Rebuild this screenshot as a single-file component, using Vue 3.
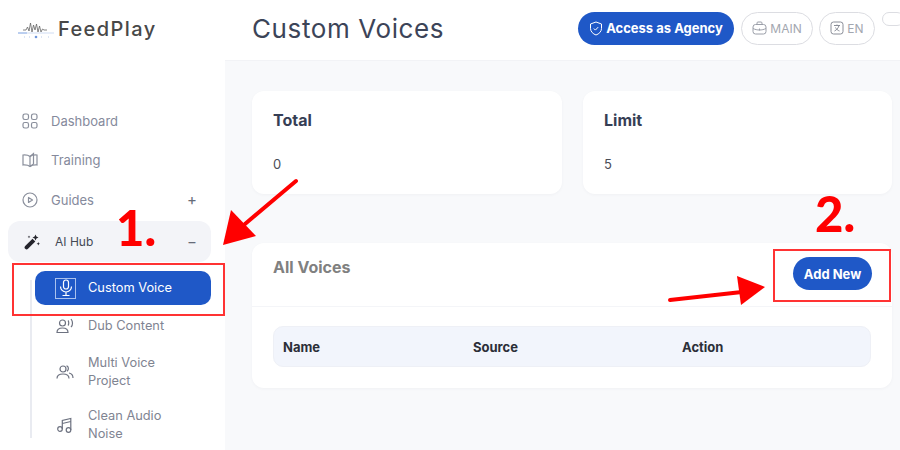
<template>
  <div class="app">
    <aside class="sidebar">
      <div class="logo">
        <svg width="38" height="22" viewBox="0 0 38 22" fill="none">
          <path d="M5 12h3l1.500-3 1.500 4 1.500-8 1.500 9 1.500-7 1.500 5 1.500-6 1.500 8 1.500-6 1.500 6 1.500-3 1.500 1h3" stroke="#666" stroke-width=".8" />
          <path d="M0 15h36" stroke="#cfdcf3" stroke-width="1" />
          <path d="M0 15h9" stroke="#8fb0e6" stroke-width="1" />
          <circle cx="18" cy="19" r="1.300" fill="#6f96dc" />
          <path d="M6 19h1M11 19h1M23 19h1M30 19h1" stroke="#b9cbeb" stroke-width="1" />
        </svg>
        <span>FeedPlay</span>
      </div>
      <nav class="nav">
        <a class="nav-item">
          <svg class="ico" viewBox="0 0 16 16" fill="none" stroke="#8a8f9c" stroke-width="1.200">
            <rect x="1" y="1" width="5.500" height="5.500" rx="1.800" />
            <rect x="9.500" y="1" width="5.500" height="5.500" rx="1.800" />
            <rect x="1" y="9.500" width="5.500" height="5.500" rx="1.800" />
            <rect x="9.500" y="9.500" width="5.500" height="5.500" rx="1.800" />
          </svg>
          <span>Dashboard</span>
        </a>
        <a class="nav-item">
          <svg class="ico" viewBox="0 0 16 16" fill="none" stroke="#8a8f9c" stroke-width="1.200">
            <path d="M8 4.500C6.500 3.200 4 2.800 1 3v10c3-.2 5.500.2 7 1.500 1.500-1.300 4-1.700 7-1.500V3c-3-.2-5.500.2-7 1.500z" />
            <path d="M8 4.500v10M8 14.500l3.500-2.500V1.500L8 4.500" />
          </svg>
          <span>Training</span>
        </a>
        <a class="nav-item">
          <svg class="ico" viewBox="0 0 16 16" fill="none" stroke="#8a8f9c" stroke-width="1.200">
            <circle cx="8" cy="8" r="7" />
            <path d="M6.500 5.500v5l4-2.500z" stroke-linejoin="round" />
          </svg>
          <span>Guides</span>
          <em class="toggle">+</em>
        </a>
        <a class="nav-item open">
          <svg class="ico" viewBox="0 0 16 16" fill="#24242c">
            <path d="M1.200 12l7.300-7.300 2.800 2.800L4 14.800a2 2 0 0 1-2.800 0 2 2 0 0 1 0-2.800z" />
            <path d="M11.500 .5l.9 2.100 2.100.9-2.100.9-.9 2.100-.9-2.100-2.100-.9 2.100-.9zM14.300 8l.5 1.200 1.200.5-1.200.5-.5 1.200-.5-1.200-1.200-.5 1.200-.5zM5 1.500l.4 1 1 .4-1 .4-.4 1-.4-1-1-.4 1-.4z" />
          </svg>
          <span>AI Hub</span>
          <em class="toggle">−</em>
        </a>
        <div class="sub">
          <a class="sub-item active">
            <span class="mic-box">
              <svg width="16" height="18" viewBox="0 0 16 18" fill="none" stroke="#fff" stroke-width="1.200">
                <rect x="5.500" y="1" width="5" height="9" rx="2.500" />
                <path d="M2.500 7.500a5.500 5.500 0 0 0 11 0M8 13v3M4.500 16.500h7" />
              </svg>
            </span>
            <span>Custom Voice</span>
          </a>
          <a class="sub-item">
            <svg class="sub-ico" viewBox="0 0 18 16" fill="none" stroke="#6d7280" stroke-width="1.200">
              <circle cx="6.500" cy="5" r="3" />
              <path d="M1 14.500c0-3 2.500-4.500 5.500-4.500s5.500 1.500 5.500 4.500zM12 2.500c1 1 1 4 0 5M15 1c2 2.500 2 6 0 8" />
            </svg>
            <span>Dub Content</span>
          </a>
          <a class="sub-item tall">
            <svg class="sub-ico" viewBox="0 0 18 16" fill="none" stroke="#6d7280" stroke-width="1.200">
              <circle cx="7" cy="5" r="3" />
              <path d="M1 14.500c0-3 2.500-4.500 6-4.500s6 1.500 6 4.500M10.500 1.800c2 .4 2.800 3.600.5 5.400M13 9c2.500.5 4 2.500 4 5" />
            </svg>
            <span>Multi Voice Project</span>
          </a>
          <a class="sub-item tall">
            <svg class="sub-ico" viewBox="0 0 18 16" fill="none" stroke="#6d7280" stroke-width="1.200">
              <circle cx="4" cy="12" r="2.300" />
              <circle cx="12.500" cy="13" r="2.300" />
              <path d="M6.300 12V3.500L14.800 1.500V13M6.300 6.500l8.500-2" />
            </svg>
            <span>Clean Audio Noise</span>
          </a>
        </div>
      </nav>
    </aside>

    <main class="main">
      <header class="topbar">
        <h1>Custom Voices</h1>
        <div class="actions">
          <button class="agency">
            <svg width="14" height="15" viewBox="0 0 14 15" fill="none" stroke="#fff" stroke-width="1">
              <path d="M7 1l5.500 2v4.500c0 3-2.500 5.500-5.500 6.500-3-1-5.500-3.500-5.500-6.500V3z" />
              <path d="M4.800 7.500l1.600 1.600 2.800-3" />
            </svg>
            Access as Agency
          </button>
          <button class="ghost main-btn">
            <svg width="15" height="14" viewBox="0 0 15 14" fill="none" stroke="#9a9ea8" stroke-width="1">
              <rect x="1" y="3.500" width="13" height="9.500" rx="2.500" />
              <path d="M5 3.500V2a1 1 0 0 1 1-1h3a1 1 0 0 1 1 1v1.500M1 7.500c4 2 9 2 13 0M7.500 7.500v2" />
            </svg>
            MAIN
          </button>
          <button class="ghost lang">
            <svg width="14" height="14" viewBox="0 0 14 14" fill="none" stroke="#8a8e98" stroke-width="1">
              <rect x="1" y="1" width="12" height="12" rx="2.500" />
              <path d="M4 4.500h6M7 3.500v1M9 4.500c-.5 2.500-2.500 4.500-4.500 5.500M5.500 6.500c.8 1.500 2.300 3 4 3.500" />
            </svg>
            EN
          </button>
          <span class="switch"></span>
        </div>
      </header>

      <div class="content">
        <section class="stats">
          <div class="card stat">
            <h3>Total</h3>
            <p>0</p>
          </div>
          <div class="card stat">
            <h3>Limit</h3>
            <p>5</p>
          </div>
        </section>
        <section class="card voices">
          <div class="voices-head">
            <h3>All Voices</h3>
            <button class="add">Add New</button>
          </div>
          <div class="voices-body">
            <div class="thead">
              <span v-for="col in columns" :key="col.name" :style="{ width: col.width + 'px' }">{{ col.name }}</span>
            </div>
          </div>
        </section>
      </div>
    </main>

    <!-- tutorial annotations drawn over the screenshot -->
    <div class="note-box box-one"></div>
    <div class="note-box box-two"></div>
    <span class="num num-one">1.</span>
    <span class="num num-two">2.</span>
    <svg class="arrows" width="900" height="450" viewBox="0 0 900 450" fill="none">
      <path d="M296 181L245 224" stroke="#f00" stroke-width="4" stroke-linecap="round" />
      <path d="M223 245L231 210L256 236z" fill="#f00" />
      <path d="M670 300L742 292" stroke="#f00" stroke-width="4" stroke-linecap="round" />
      <path d="M737 276L765 287L741 305z" fill="#f00" />
    </svg>
  </div>
</template>

<script setup>
const columns = [
  { name: 'Name', width: 190 },
  { name: 'Source', width: 209 },
  { name: 'Action', width: 150 }
]
</script>

<style>
html, body {
  margin: 0;
  background: #f8f9fb;
}
</style>

<style scoped>
.app {
  position: relative;
  display: flex;
  width: 900px;
  height: 450px;
  overflow: hidden;
  font-family: "Inter", "Noto Sans", sans-serif;
  background: #f8f9fb;
}
.sidebar {
  width: 225px;
  flex: none;
  background: #fff;
  box-sizing: border-box;
  padding: 0 14px 0 8px;
}
.logo {
  display: flex;
  align-items: center;
  gap: 2px;
  height: 20px;
  margin: 19px 0 0 10px;
  font-size: 20px;
  font-weight: 500;
  color: #484848;
  letter-spacing: 1.400px;
}
.nav {
  margin-top: 62px;
}
.nav-item {
  display: flex;
  align-items: center;
  height: 39.500px;
  padding: 0 14px;
  font-size: 13px;
  color: #858a9c;
}
.nav-item.open {
  height: 41px;
  margin-top: 1.500px;
  border-radius: 12px;
  background: #f3f4f8;
  color: #444955;
  font-size: 12px;
}
.ico {
  width: 16px;
  height: 16px;
  margin-right: 13px;
}
.open .ico {
  margin-left: 2px;
  margin-right: 15px;
}
.toggle {
  margin-left: auto;
  font-style: normal;
  font-size: 15px;
  color: #666b78;
}
.sub {
  margin: 9px 0 0 22px;
  border-left: 1px solid transparent;
  position: relative;
}
.sub::before {
  content: "";
  position: absolute;
  left: -1px;
  top: 9px;
  height: 158px;
  width: 1.500px;
  background: #e9ebf1;
}
.sub-item {
  display: flex;
  align-items: center;
  margin-left: 4px;
  min-height: 40px;
  padding-left: 21px;
  font-size: 12.800px;
  line-height: 18px;
  color: #7f8492;
}
.sub-item.active {
  height: 34px;
  min-height: 34px;
  margin-bottom: 1px;
  padding-left: 20px;
  border-radius: 10px;
  background: #1f58c7;
  color: #fff;
}
.sub-item.tall {
  width: 118px;
  min-height: 36px;
  margin-bottom: 17px;
}
.sub-item.tall:nth-child(3) {
  margin-top: 8px;
}
.mic-box {
  display: flex;
  align-items: center;
  justify-content: center;
  width: 21px;
  height: 21px;
  margin-right: 12px;
  border: 1px solid #a9c1ee;
  box-sizing: border-box;
}
.sub-ico {
  flex: none;
  width: 18px;
  height: 16px;
  margin-right: 14px;
}
.main {
  flex: 1;
  min-width: 0;
}
.topbar {
  display: flex;
  align-items: center;
  justify-content: space-between;
  height: 61px;
  padding: 0 0 0 27px;
  box-sizing: border-box;
  background: #fff;
  border-bottom: 1px solid #f2f3f6;
}
h1 {
  margin: -4px 0 0;
  font-size: 26px;
  font-weight: 400;
  color: #3c4458;
  letter-spacing: .6px;
}
.actions {
  display: flex;
  align-items: center;
  gap: 6px;
  height: 33px;
  margin-top: -4px;
}
button {
  font-family: inherit;
  border: 0;
  cursor: pointer;
}
.agency {
  display: flex;
  align-items: center;
  justify-content: center;
  gap: 3px;
  width: 156px;
  height: 33px;
  margin-right: 1px;
  border-radius: 17px;
  background: #1f58c7;
  color: #fff;
  font-size: 13px;
  font-weight: 700;
  padding: 0;
}
.ghost {
  display: flex;
  align-items: center;
  justify-content: center;
  gap: 3px;
  height: 33px;
  padding: 0;
  border: 1px solid #dcdde2;
  border-radius: 17px;
  background: #fff;
  color: #a3a7b0;
  font-size: 12px;
}
.main-btn {
  width: 72px;
}
.lang {
  width: 56px;
}
.switch {
  align-self: flex-start;
  width: 22px;
  height: 14px;
  margin: 0 -4px 0 1px;
  border: 1px solid #dcdde2;
  border-radius: 7px;
  box-sizing: border-box;
}
.content {
  padding: 30px 8px 0 27px;
}
.card {
  background: #fff;
  border-radius: 12px;
  box-shadow: 0 1px 3px rgba(40, 50, 80, .04);
}
.stats {
  display: grid;
  grid-template-columns: 310px 309px;
  gap: 21px;
}
.stat {
  height: 103px;
  padding: 19px 21px;
  box-sizing: border-box;
}
h3 {
  margin: 0;
  font-size: 16px;
  font-weight: 700;
  color: #363e55;
}
.stat p {
  margin: 26px 0 0;
  font-size: 13px;
  color: #4a4d57;
}
.voices {
  height: 145px;
  margin-top: 49px;
}
.voices-head {
  display: flex;
  align-items: center;
  justify-content: space-between;
  height: 64px;
  box-sizing: border-box;
  padding: 0 20px 0 21px;
  border-bottom: 1px solid #f4f5f8;
}
.voices-head h3 {
  font-size: 16px;
  color: #808080;
  margin-top: -15px;
  font-weight: 700;
}
.add {
  width: 79px;
  height: 33px;
  border-radius: 17px;
  background: #1f58c7;
  color: #fff;
  font-size: 13px;
  font-weight: 700;
  padding: 0;
  margin-top: -2px;
}
.voices-body {
  padding: 19px 21px 0;
}
.thead {
  display: flex;
  align-items: center;
  height: 41px;
  box-sizing: border-box;
  padding-left: 9px;
  border: 1px solid #eef0f6;
  border-radius: 10px;
  background: #f2f5fc;
  font-size: 13px;
  font-weight: 700;
  color: #2c2f38;
}
.note-box {
  position: absolute;
  border: 2.500px solid #f33;
  box-sizing: border-box;
}
.box-one {
  left: 12px;
  top: 263px;
  width: 213px;
  height: 53px;
}
.box-two {
  left: 773px;
  top: 249px;
  width: 118px;
  height: 53px;
}
.num {
  position: absolute;
  font-family: "Lato", sans-serif;
  font-weight: 900;
  font-size: 49px;
  line-height: 49px;
  color: #f00;
}
.num-one {
  left: 116px;
  top: 203px;
}
.num-two {
  left: 815px;
  top: 189px;
}
.arrows {
  position: absolute;
  left: 0;
  top: 0;
  pointer-events: none;
}
</style>
